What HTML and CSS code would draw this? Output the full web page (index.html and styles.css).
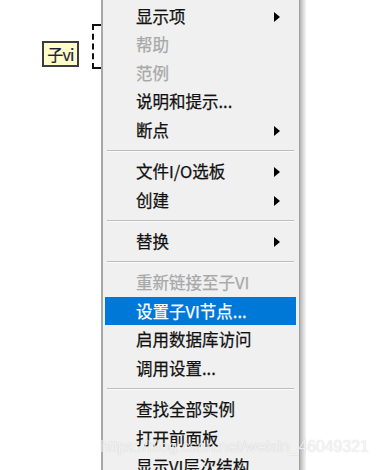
FILE: index.html
```html
<!DOCTYPE html>
<html>
<head>
<meta name="viewport" content="width=device-width, initial-scale=1">
<link rel="stylesheet" href="styles.css">
</head>
<body>

<div class="screen">
  <div class="diagram">
    <div class="subvi">子vi</div>
    <div class="bracket"></div>
  </div>

  <div class="menu">
    <div class="item sub">显示项</div>
    <div class="item off">帮助</div>
    <div class="item off">范例</div>
    <div class="item">说明和提示...</div>
    <div class="item sub">断点</div>
    <div class="sep"></div>
    <div class="item sub">文件I/O选板</div>
    <div class="item sub">创建</div>
    <div class="sep"></div>
    <div class="item sub">替换</div>
    <div class="sep"></div>
    <div class="item off">重新链接至子VI</div>
    <div class="item active">设置子VI节点...</div>
    <div class="item">启用数据库访问</div>
    <div class="item">调用设置...</div>
    <div class="sep"></div>
    <div class="item">查找全部实例</div>
    <div class="item">打开前面板</div>
    <div class="item">显示VI层次结构</div>
  </div>
  <div class="shadow"></div>
</div>

<div class="watermark">https://blog.csdn.net/weixin_46049321</div>

</body>
</html>
```

FILE: styles.css
```css
body {
    margin: 0;
    background: #fff;
    font-family: "Noto Sans CJK SC", "Noto Sans", sans-serif;
    overflow: hidden;
}

.screen {
    display: flex;
    height: 470px;
    overflow: hidden;
}

.diagram {
    position: relative;
    width: 101px;
    flex: none;
}

.subvi {
    position: absolute;
    left: 42px;
    top: 41px;
    width: 33px;
    height: 22px;
    border: 2px solid #3c3c3c;
    background: #fffccc;
    color: #1c1c3a;
    font-size: 16px;
    line-height: 22px;
    text-align: center;
    letter-spacing: -0.8px;
    -webkit-text-stroke: 0.2px #1c1c3a;
}

.bracket {
    position: absolute;
    left: 92px;
    top: 24px;
    width: 7px;
    height: 41px;
    border: 2px dashed #111;
    border-right: none;
}

.menu {
    width: 196px;
    flex: none;
    padding-top: 1.5px;
    background: #f0f0f0;
    border-left: 2px solid #a8a8a8;
    border-right: 1px solid #a0a0a0;
}

.shadow {
    width: 6px;
    flex: none;
    background: linear-gradient(to right, #b4b4b4, #d8d8d8 50%, #f4f4f4);
}

.item {
    position: relative;
    height: 28.6px;
    margin: 0 3px 0 2px;
    padding-left: 31px;
    font-size: 16.5px;
    line-height: 28px;
    color: #111;
    white-space: nowrap;
    -webkit-text-stroke: 0.25px currentColor;
}

.item.off {
    color: #a8a8a8;
}

.item.active {
    background: #0078d7;
    color: #fff;
}

.item.sub::after {
    content: "";
    position: absolute;
    right: 16px;
    top: 10px;
    border-left: 6px solid #000;
    border-top: 5px solid transparent;
    border-bottom: 5px solid transparent;
}

.sep {
    height: 12.6px;
    display: flex;
    align-items: center;
    padding: 0 5px 0 4px;
}

.sep::before {
    content: "";
    flex: 1;
    height: 1px;
    background: #bdbdbd;
    border-bottom: 1px solid #fafafa;
}

.watermark {
    position: absolute;
    left: 100px;
    top: 438px;
    font-family: "Liberation Sans", Arial, sans-serif;
    font-size: 15.8px;
    color: rgba(255, 255, 255, 0.8);
    text-shadow: 0 0 1px rgba(0, 0, 0, 0.22);
    white-space: nowrap;
}
```
